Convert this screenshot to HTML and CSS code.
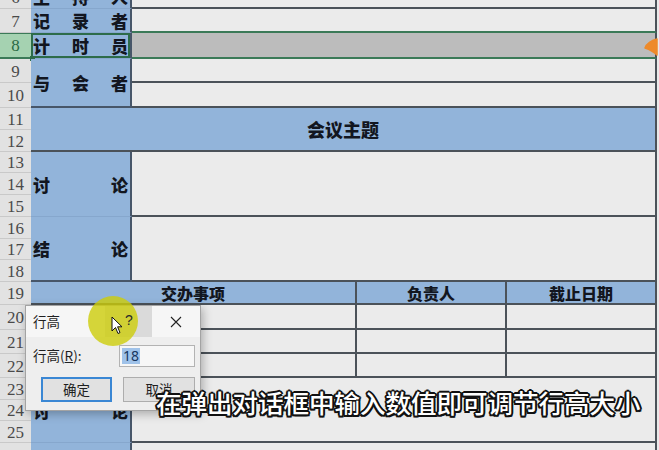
FILE: index.html
```html
<!DOCTYPE html>
<html lang="zh-CN">
<head>
<meta charset="utf-8">
<title>行高</title>
<link rel="stylesheet" href="styles.css">
</head>
<body>
<div class="screen">
  <div class="sheet">
    <!-- row 6 -->
    <div class="rh g1">6</div>
    <div class="lab cB g1"><span>主</span><span>持</span><span>人</span></div>
    <div class="dat cCE g1"></div>
    <!-- row 7 -->
    <div class="rh g2">7</div>
    <div class="lab cB g2"><span>记</span><span>录</span><span>者</span></div>
    <div class="dat cCE g2 pre"></div>
    <!-- row 8 -->
    <div class="rh g3 sel">8</div>
    <div class="lab cB g3 selc"><span>计</span><span>时</span><span>员</span><i class="handle"></i></div>
    <div class="dat cCE g3 sel"></div>
    <!-- rows 9-10 -->
    <div class="rh g4">9</div>
    <div class="rh g5">10</div>
    <div class="lab cB g4-5 dark"><span>与</span><span>会</span><span>者</span></div>
    <div class="dat cCE g4"></div>
    <div class="dat cCE g5"></div>
    <!-- rows 11-12 -->
    <div class="rh g6">11</div>
    <div class="rh g7">12</div>
    <div class="head cBE g6-7 big">会议主题</div>
    <!-- rows 13-15 -->
    <div class="rh g8">13</div>
    <div class="rh g9">14</div>
    <div class="rh g10">15</div>
    <div class="lab cB g8-10"><span>讨</span><span>论</span></div>
    <div class="dat cCE g8-10"></div>
    <!-- rows 16-18 -->
    <div class="rh g11">16</div>
    <div class="rh g12">17</div>
    <div class="rh g13">18</div>
    <div class="lab cB g11-13 dark"><span>结</span><span>论</span></div>
    <div class="dat cCE g11-13"></div>
    <!-- row 19 -->
    <div class="rh g14">19</div>
    <div class="head cBC g14">交办事项</div>
    <div class="head cD g14">负责人</div>
    <div class="head cE g14">截止日期</div>
    <!-- rows 20-22 -->
    <div class="rh g15">20</div>
    <div class="dat cBC g15"></div>
    <div class="dat cD g15"></div>
    <div class="dat cE g15"></div>
    <div class="rh g16">21</div>
    <div class="dat cBC g16"></div>
    <div class="dat cD g16"></div>
    <div class="dat cE g16"></div>
    <div class="rh g17">22</div>
    <div class="dat cBC g17"></div>
    <div class="dat cD g17"></div>
    <div class="dat cE g17"></div>
    <!-- rows 23-25 -->
    <div class="rh g18">23</div>
    <div class="rh g19">24</div>
    <div class="rh g20">25</div>
    <div class="lab cB g18-20"><span>讨</span><span>论</span></div>
    <div class="dat cCE g18-20"></div>
    <!-- row 26 -->
    <div class="rh g21">26</div>
    <div class="lab cB g21"></div>
    <div class="dat cCE g21"></div>
  </div>

  <svg class="mark" width="14" height="20" viewBox="0 0 14 20">
    <path d="M13 2 C8 3 2 7 1 11 C4 12 9 14 13 18 Z" fill="#ee8a2a" stroke="#ee8a2a" stroke-width="1.5" stroke-linejoin="round"/>
  </svg>

  <div class="dialog">
    <div class="titlebar">
      <span class="title">行高</span>
      <span class="help">?</span>
      <span class="close">
        <svg width="12" height="12" viewBox="0 0 12 12"><path d="M1 1 L11 11 M11 1 L1 11" stroke="#222" stroke-width="1.1" fill="none"/></svg>
      </span>
    </div>
    <div class="dbody">
      <div class="field">
        <span class="flabel">行高(<u>R</u>):</span>
        <span class="input"><span class="selected">18</span></span>
      </div>
      <div class="buttons">
        <span class="btn primary">确定</span>
        <span class="btn">取消</span>
      </div>
    </div>
  </div>

  <div class="spot"></div>
  <svg class="cursor" width="12" height="19" viewBox="0 0 12 19">
    <path d="M1 1 L1 15 L4.5 11.5 L7 17.5 L9 16.6 L6.6 10.8 L11 10.8 Z" fill="#fff" stroke="#111" stroke-width="1" stroke-linejoin="round"/>
  </svg>
  <span class="qmark">?</span>

  <div class="subtitle">在弹出对话框中输入数值即可调节行高大小</div>
</div>
</body>
</html>
```

FILE: styles.css
```css
html, body {
  margin: 0;
  padding: 0;
}
body {
  background: #e8e8e8;
}
.screen {
  position: relative;
  width: 659px;
  height: 450px;
  overflow: hidden;
  background: #e9e9e9;
}
.sheet {
  display: grid;
  grid-template-columns: 31px 101px 225px 150px 150px 2px;
  grid-template-rows: 24px 24px 26px 24px 25px 22px 22px 21px 22px 22px 22px 21px 22px 23px 25px 24px 24px 22px 21px 22px 40px;
  margin-top: -15px;
}

/* placement */
.g1 { grid-row: 1; }
.g2 { grid-row: 2; }
.g3 { grid-row: 3; }
.g4 { grid-row: 4; }
.g5 { grid-row: 5; }
.g6 { grid-row: 6; }
.g7 { grid-row: 7; }
.g8 { grid-row: 8; }
.g9 { grid-row: 9; }
.g10 { grid-row: 10; }
.g11 { grid-row: 11; }
.g12 { grid-row: 12; }
.g13 { grid-row: 13; }
.g14 { grid-row: 14; }
.g15 { grid-row: 15; }
.g16 { grid-row: 16; }
.g17 { grid-row: 17; }
.g18 { grid-row: 18; }
.g19 { grid-row: 19; }
.g20 { grid-row: 20; }
.g21 { grid-row: 21; }
.g4-5 { grid-row: 4 / span 2; }
.g6-7 { grid-row: 6 / span 2; }
.g8-10 { grid-row: 8 / span 3; }
.g11-13 { grid-row: 11 / span 3; }
.g18-20 { grid-row: 18 / span 3; }
.cB { grid-column: 2; }
.cCE { grid-column: 3 / 6; }
.cBE { grid-column: 2 / 6; }
.cBC { grid-column: 2 / 4; }
.cD { grid-column: 4; }
.cE { grid-column: 5; }

/* row headers */
.rh {
  grid-column: 1;
  box-sizing: border-box;
  background: #e2e2e2;
  border-bottom: 1px solid #c9c9c9;
  color: #4a4a4a;
  font: 17px/1 "Liberation Serif", serif;
  display: flex;
  align-items: center;
  justify-content: center;
  padding-top: 1px;
}
.rh.sel {
  background: #a5d2b1;
  color: #2a6b44;
  border-bottom: 2px solid #3b7a58;
  box-shadow: inset 0 1px 0 #3b7a58;
}

/* blue label cells */
.lab {
  position: relative;
  box-sizing: border-box;
  background: #92b4da;
  border-right: 2px solid #475669;
  border-bottom: 1px solid #86a7cd;
  display: flex;
  justify-content: space-between;
  align-items: center;
  padding: 0 2px 0 2px;
  font: 900 17px/1 "Noto Sans CJK SC", sans-serif;
  color: #121620;
}
.lab.dark {
  border-bottom: 2px solid #475669;
}
.lab.selc {
  box-shadow: inset 0 0 0 2px #2d6c4a;
}
.handle {
  position: absolute;
  left: -1px;
  bottom: -3px;
  width: 5px;
  height: 5px;
  background: #2d6c4a;
}

/* data cells */
.dat {
  box-sizing: border-box;
  background: #ebebeb;
  border-right: 2px solid #4b5259;
  border-bottom: 2px solid #4b5259;
}
.dat.pre {
  border-bottom-color: #3b7a58;
}
.dat.sel {
  background: #bcbcbc;
  border-bottom-color: #3b7a58;
}

/* header (blue) cells */
.head {
  box-sizing: border-box;
  background: #92b4da;
  border-right: 2px solid #4b5259;
  border-bottom: 2px solid #4b5259;
  display: flex;
  align-items: center;
  justify-content: center;
  font: 900 16px/1 "Noto Sans CJK SC", sans-serif;
  color: #121620;
}
.head.big {
  font-size: 18px;
  border-top: 2px solid #4b5259;
  margin-top: -2px;
}

/* orange marker at the right of row 8 */
.mark {
  position: absolute;
  left: 644px;
  top: 37px;
}

/* dialog */
.dialog {
  position: absolute;
  left: 25px;
  top: 305px;
  width: 176px;
  height: 106px;
  box-sizing: border-box;
  background: #eeeeee;
  border: 1px solid #a3a3a3;
  box-shadow: 2px 3px 9px rgba(0, 0, 0, 0.28);
  font: 13.5px/1 "Noto Sans CJK SC", sans-serif;
  color: #1f1f1f;
}
.titlebar {
  height: 31px;
  background: #f6f6f6;
  display: flex;
  align-items: center;
  padding-left: 7px;
}
.title {
  flex: 1;
}
.help {
  width: 47px;
  height: 31px;
  background: #dadada;
  color: transparent;
  display: flex;
  align-items: center;
  justify-content: center;
  font-family: "Liberation Sans", sans-serif;
  font-size: 14px;
}
.close {
  width: 48px;
  height: 31px;
  display: flex;
  align-items: center;
  justify-content: center;
}
.dbody {
  padding: 8px 5px 0 7px;
}
.field {
  display: flex;
  align-items: center;
}
.flabel {
  flex: 1;
}
.flabel u {
  text-underline-offset: 1px;
}
.input {
  width: 76px;
  height: 22px;
  box-sizing: border-box;
  border: 1px solid #b3b3b3;
  background: #f7f7f7;
  display: flex;
  align-items: center;
  padding-left: 2px;
}
.selected {
  background: #9fc2e9;
  color: #17365f;
  font-family: "Noto Sans", sans-serif;
  font-size: 14px;
  line-height: 16px;
  padding: 0 1px;
}
.buttons {
  display: flex;
  justify-content: flex-end;
  gap: 11px;
  margin-top: 10px;
}
.btn {
  width: 72px;
  height: 25px;
  box-sizing: border-box;
  background: #e1e1e1;
  border: 1px solid #adadad;
  display: flex;
  align-items: center;
  justify-content: center;
}
.btn.primary {
  width: 71px;
  border: 2px solid #3a87d4;
}

/* cursor highlight */
.spot {
  position: absolute;
  left: 88px;
  top: 296px;
  width: 50px;
  height: 50px;
  border-radius: 50%;
  background: rgba(205, 205, 10, 0.8);
}
.cursor {
  position: absolute;
  left: 111px;
  top: 316px;
}
.qmark {
  position: absolute;
  left: 125px;
  top: 313px;
  font: 14px/1 "Liberation Sans", sans-serif;
  color: #2a2a2a;
}

/* subtitle overlay */
.subtitle {
  position: absolute;
  left: 156px;
  top: 389px;
  font: 500 25.5px/26px "Noto Sans CJK SC", sans-serif;
  color: #ffffff;
  white-space: nowrap;
  text-shadow:
    2px 0 0 #111, -2px 0 0 #111, 0 2px 0 #111, 0 -2px 0 #111,
    1.5px 1.5px 0 #111, -1.5px 1.5px 0 #111, 1.5px -1.5px 0 #111, -1.5px -1.5px 0 #111,
    0 0 2px #000;
}
```
